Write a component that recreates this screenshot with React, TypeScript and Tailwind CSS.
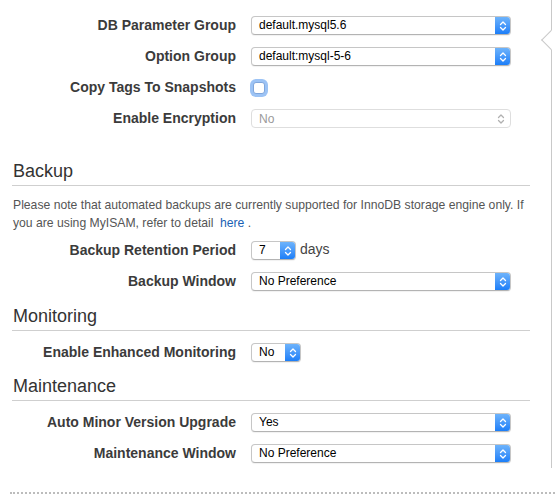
import React from 'react';

const Arrows = ({ color }: { color: string }) => (
  <svg width="8" height="12" viewBox="0 0 8 12" fill="none">
    <path d="M1.5 4.5 L4 2 L6.5 4.5" stroke={color} strokeWidth="1.3" strokeLinecap="round" strokeLinejoin="round" />
    <path d="M1.5 7.5 L4 10 L6.5 7.5" stroke={color} strokeWidth="1.3" strokeLinecap="round" strokeLinejoin="round" />
  </svg>
);

const Select = ({ value, width, disabled }: { value: string; width: string; disabled?: boolean }) => {
  if (disabled) {
    return (
      <div className={`${width} h-[19px] flex items-center justify-between rounded-[4px] border border-[#dedede] bg-white pl-[7px] pr-[5px] text-[12px] text-[#9a9a9a]`}>
        <span>{value}</span>
        <Arrows color="#b0b0b0" />
      </div>
    );
  }
  return (
    <div className={`${width} h-[19px] flex items-stretch rounded-[4px] border border-[#c6c6c6] border-b-[#b3b3b3] bg-white shadow-[0_1px_1px_rgba(0,0,0,0.06)] overflow-hidden`}>
      <span className="flex-1 pl-[7px] text-[12px] leading-[17px] text-black">{value}</span>
      <div className="w-[15px] flex items-center justify-center bg-gradient-to-b from-[#6db3fb] to-[#1a7ef8]">
        <Arrows color="#ffffff" />
      </div>
    </div>
  );
};

const Row = ({ label, children }: { label: string; children: React.ReactNode }) => (
  <div className="flex items-center h-[19px] mb-[12px]">
    <div className="w-[236px] text-right text-[14px] font-bold text-[#3b3b3b] leading-[19px]">{label}</div>
    <div className="ml-[15px] flex items-center">{children}</div>
  </div>
);

const Heading = ({ title, className }: { title: string; className: string }) => (
  <div className={`ml-[12px] w-[518px] border-b border-[#cfcfcf] pb-[4px] ${className}`}>
    <h2 className="text-[18px] leading-[20px] text-[#333] pl-[1px]">{title}</h2>
  </div>
);

export default function App() {
  return (
    <div className="relative w-[555px] h-[497px] bg-white overflow-hidden font-['Liberation_Sans',Arial,sans-serif]">
      <div className="relative w-[552px] h-[468px] border-r border-[#c9c9c9] pt-[16px]">
        {/* pointer notch on the side panel */}
        <div className="absolute left-[544px] top-[33px] w-[14px] h-[14px] rotate-45 bg-white border-l border-b border-[#c9c9c9]" />

        <Row label="DB Parameter Group">
          <Select value="default.mysql5.6" width="w-[260px]" />
        </Row>
        <Row label="Option Group">
          <Select value="default:mysql-5-6" width="w-[260px]" />
        </Row>
        <Row label="Copy Tags To Snapshots">
          <div className="ml-[2px] w-[12px] h-[12px] rounded-[3px] border border-[#7fa6dc] bg-white shadow-[0_0_0_3px_#9cc3f5]" />
        </Row>
        <Row label="Enable Encryption">
          <Select value="No" width="w-[260px]" disabled />
        </Row>

        <Heading title="Backup" className="mt-[33px]" />
        <p className="mt-[10px] ml-[13px] text-[12.2px] leading-[18px] text-[#555]">
          Please note that automated backups are currently supported for InnoDB storage engine only. If
          <br />
          you are using MyISAM, refer to detail <a className="ml-[3px] text-[#1a5fb4]">here</a> .
        </p>
        <div className="mt-[9px]">
          <Row label="Backup Retention Period">
            <Select value="7" width="w-[45px]" />
            <span className="ml-[4px] text-[14px] text-[#444] leading-[16px] -mt-[3px]">days</span>
          </Row>
          <Row label="Backup Window">
            <Select value="No Preference" width="w-[260px]" />
          </Row>
        </div>

        <Heading title="Monitoring" className="mt-[15px]" />
        <div className="mt-[12px]">
          <Row label="Enable Enhanced Monitoring">
            <Select value="No" width="w-[50px]" />
          </Row>
        </div>

        <Heading title="Maintenance" className="mt-[14px]" />
        <div className="mt-[12px]">
          <Row label="Auto Minor Version Upgrade">
            <Select value="Yes" width="w-[260px]" />
          </Row>
          <Row label="Maintenance Window">
            <Select value="No Preference" width="w-[260px]" />
          </Row>
        </div>
      </div>
      <div className="ml-[10px] mt-[24px] border-t-2 border-dotted border-[#bcbcbc]" />
    </div>
  );
}
